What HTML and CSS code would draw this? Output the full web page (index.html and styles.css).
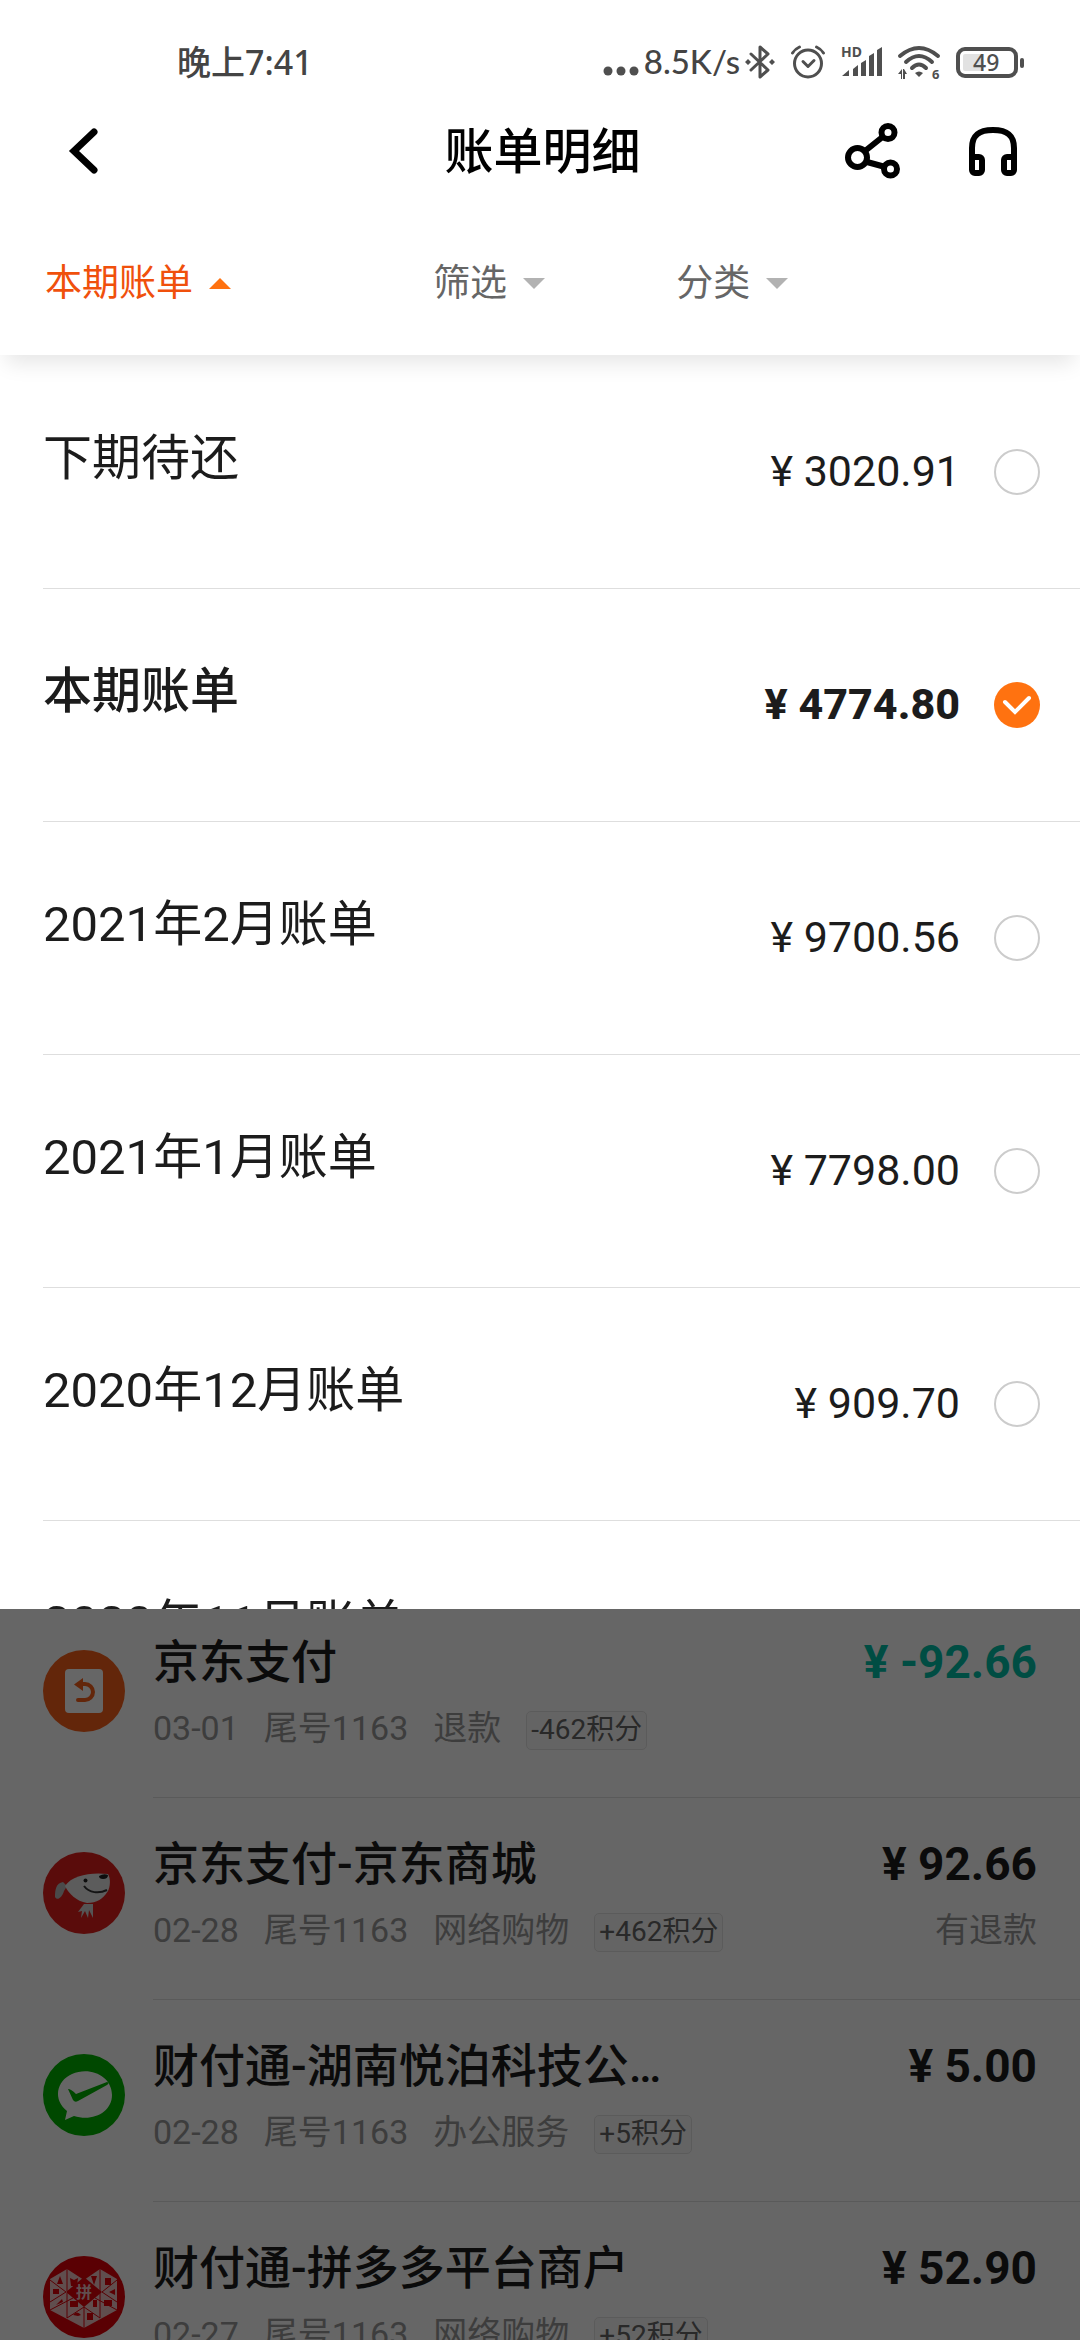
FILE: index.html
```html
<!DOCTYPE html>
<html lang="zh-CN">
  <head>
    <meta charset="UTF-8" />
    <meta name="viewport" content="width=device-width, initial-scale=1.0" />
    <title>账单明细</title>
    <link rel="stylesheet" href="styles.css">
  </head>
  <body>
    <header>
      <div class="status">
        <span class="time">晚上7:41</span>
        <div class="status-right">
          <div class="net">
            <svg class="dots" width="36" height="34" viewBox="0 0 36 34">
              <circle cx="5" cy="26" r="4.5" />
              <circle cx="18" cy="26" r="4.5" />
              <circle cx="31" cy="26" r="4.5" />
            </svg>
            <span>8.5K/s</span>
            <svg class="line" width="30" height="34" viewBox="0 0 30 34" stroke-width="3">
              <path d="M6 9L23 25L15 32V2L23 9L6 25" />
              <path d="M3 14L6 17L3 20L0 17zM27 14L30 17L27 20L24 17z" fill="#4f4f4f" stroke="none" />
            </svg>
          </div>
          <svg class="line" width="34" height="34" viewBox="0 0 34 34" stroke-width="3">
            <circle cx="17" cy="18.500" r="13.500" />
            <path d="M1.500 8Q4 4 8.500 2M32.500 8Q30 4 25.500 2M12 16.500l5 5 6-6" />
          </svg>
          <svg width="41" height="34" viewBox="0 0 41 34">
            <text x="0" y="12" font-size="14" class="svg-text">HD</text>
            <path d="M1 31L8 25V31zM12 24l5-4v11h-5zM20 18l5-3v16h-5zM28 11l5-3v23h-5zM36 5l5-3v29h-5z" />
          </svg>
          <svg width="42" height="34" viewBox="0 0 42 34">
            <g class="line" stroke-width="4">
              <path d="M2 11Q21-5 40 11M8 17Q21 5 34 17M14 23Q21 16 28 23" />
            </g>
            <path d="M17 28Q21 25 25 28L21 32z" />
            <path d="M0 29l4-5v10H3v-5zM5 34V24h1l3 5H7v5z" />
            <text x="34" y="34" font-size="13" class="svg-text">6</text>
          </svg>
          <svg width="68" height="34" viewBox="0 0 68 34">
            <rect x="2" y="4" width="58" height="27" rx="7" fill="none" stroke="#4f4f4f" stroke-width="4" />
            <rect x="7" y="9" width="20" height="17" rx="2" fill="#e2e2e2" />
            <rect x="64" y="13" width="4" height="10" rx="2" />
            <text x="17" y="26" font-size="23" class="svg-text thin">49</text>
          </svg>
        </div>
      </div>

      <div class="titlebar">
        <a href="#" class="back" aria-label="返回">
          <svg width="32" height="46" viewBox="0 0 32 46">
            <path d="M27 4L7 23L27 42" fill="none" stroke="#000" stroke-width="7" stroke-linecap="round" />
          </svg>
        </a>
        <h1>账单明细</h1>
        <div class="actions">
          <button type="button" aria-label="分享">
            <svg width="56" height="56" viewBox="0 0 56 56" fill="none" stroke="#000" stroke-width="6">
              <circle cx="12.500" cy="34.500" r="9.500" />
              <circle cx="43" cy="9.500" r="6.500" />
              <circle cx="45.500" cy="46" r="6.500" />
              <path d="M20 28L37.500 14M22 39L38.500 43.500" />
            </svg>
          </button>
          <button type="button" aria-label="客服">
            <svg width="50" height="50" viewBox="0 0 50 50" fill="none" stroke="#000" stroke-width="6" stroke-linejoin="round">
              <path d="M4 34V22C4 9 11 4 25 4S46 9 46 22V34" />
              <rect x="4" y="31" width="10" height="16" rx="3" />
              <rect x="36" y="31" width="10" height="16" rx="3" />
            </svg>
          </button>
        </div>
      </div>

      <nav class="tabs">
        <button type="button" class="tab active">本期账单<i class="arrow"></i></button>
        <button type="button" class="tab">筛选<i class="arrow"></i></button>
        <button type="button" class="tab">分类<i class="arrow"></i></button>
      </nav>
    </header>

    <ul class="sheet">
      <li>
        <label for="bill1">下期待还</label>
        <span class="sum">¥ 3020.91</span>
        <input type="radio" name="bill" id="bill1" />
      </li>
      <li class="selected">
        <label for="bill2">本期账单</label>
        <span class="sum">¥ 4774.80</span>
        <input type="radio" name="bill" id="bill2" checked />
      </li>
      <li>
        <label for="bill3">2021年2月账单</label>
        <span class="sum">¥ 9700.56</span>
        <input type="radio" name="bill" id="bill3" />
      </li>
      <li>
        <label for="bill4">2021年1月账单</label>
        <span class="sum">¥ 7798.00</span>
        <input type="radio" name="bill" id="bill4" />
      </li>
      <li>
        <label for="bill5">2020年12月账单</label>
        <span class="sum">¥ 909.70</span>
        <input type="radio" name="bill" id="bill5" />
      </li>
      <li>
        <label for="bill6">2020年11月账单</label>
        <input type="radio" name="bill" id="bill6" />
      </li>
    </ul>

    <main>
      <ul class="records">
        <li>
          <svg class="logo" viewBox="0 0 82 82">
            <circle cx="41" cy="41" r="41" fill="#f8601a" />
            <rect x="22" y="19" width="38" height="44" rx="4" fill="#fff" />
            <path d="M38 34H42a8 8 0 0 1 0 16H35" fill="none" stroke="#f8601a" stroke-width="4" stroke-linecap="round" />
            <path d="M31 34.500L40 28V41z" fill="#f8601a" />
          </svg>
          <div class="info">
            <div class="row">
              <h2>京东支付</h2>
              <span class="money refund">¥ -92.66</span>
            </div>
            <div class="row sub">
              <span>03-01</span>
              <span>尾号1163</span>
              <span>退款</span>
              <span class="tag">-462积分</span>
            </div>
          </div>
        </li>
        <li>
          <svg class="logo" viewBox="0 0 82 82">
            <circle cx="41" cy="41" r="41" fill="#e0201c" />
            <path d="M20 30C13 31 12 38 12 45C14 49 19 46 21 39L24 34z" fill="#b9b9b9" />
            <path d="M22 34C29 23 48 20 65 22C68 27 67 35 65 39C60 47 54 51 44 51C33 49 26 42 22 34z" fill="#e6e6e6" />
            <path d="M41 34C46 41 56 42 64 38" fill="none" stroke="#333" stroke-width="2" />
            <circle cx="42.500" cy="28.500" r="2" fill="#222" />
            <path d="M56 24Q61 21 65 23Q65 27 60 27Q56 27 56 24z" fill="#222" />
            <path d="M41 52H50V66L46 58L45 66L42 59L38 66L39 59L35 60z" fill="#d4d4d4" />
          </svg>
          <div class="info">
            <div class="row">
              <h2>京东支付-京东商城</h2>
              <span class="money">¥ 92.66</span>
            </div>
            <div class="row sub">
              <span>02-28</span>
              <span>尾号1163</span>
              <span>网络购物</span>
              <span class="tag">+462积分</span>
              <span class="note">有退款</span>
            </div>
          </div>
        </li>
        <li>
          <svg class="logo" viewBox="0 0 82 82">
            <circle cx="41" cy="41" r="41" fill="#02b300" />
            <path d="M22 66L24 57C10 46 13 27 29 20C47 12 69 22 69 41C69 58 50 68 31 62Z" fill="#fff" />
            <path d="M25 35Q28 35 33 40L64 28Q67 29 64 31L35 47Q32 49 30 46z" fill="#02b300" />
          </svg>
          <div class="info">
            <div class="row">
              <h2>财付通-湖南悦泊科技公…</h2>
              <span class="money">¥ 5.00</span>
            </div>
            <div class="row sub">
              <span>02-28</span>
              <span>尾号1163</span>
              <span>办公服务</span>
              <span class="tag">+5积分</span>
            </div>
          </div>
        </li>
        <li>
          <svg class="logo" viewBox="0 0 82 82">
            <circle cx="41" cy="41" r="41" fill="#e00008" />
            <path d="M24 13L41 24L57 13L74 23V54L41 72L7 54V23z" fill="#efc4c4" />
            <path d="M41 21L59 36L41 51L23 36z" fill="#e00008" />
            <path d="M24 13V35M57 13V35M24 37V62M57 37V62M41 51V72M7 24L23 36M74 24L59 36M7 46L23 36M74 46L59 36M7 54L30 42M74 54L52 42M24 62L41 51L57 62" fill="none" stroke="#e00008" stroke-width="1" />
            <g fill="#e00008">
              <path d="M17 20l3 8h-6zM27 22l4 2 4-2-1 8h-6zM48 20h6l-3 9zM62 22h6v7h-6zM10 33h6v5h-6zM66 36l6-3v6zM13 49l6-6 1 3zM27 45h8v6h-8zM50 44h4v7h-4zM61 44h8v6h-8zM30 59q4-5 8 0l-3 1zM44 57h6v7h-6z" />
            </g>
            <text x="41" y="42" font-size="16" text-anchor="middle" class="pin">拼</text>
          </svg>
          <div class="info">
            <div class="row">
              <h2>财付通-拼多多平台商户</h2>
              <span class="money">¥ 52.90</span>
            </div>
            <div class="row sub">
              <span>02-27</span>
              <span>尾号1163</span>
              <span>网络购物</span>
              <span class="tag">+52积分</span>
            </div>
          </div>
        </li>
      </ul>
      <div class="mask"></div>
    </main>
  </body>
</html>
```
FILE: styles.css
```css
* {
  margin: 0;
  padding: 0;
  box-sizing: border-box;
}

body {
  display: flex;
  flex-direction: column;
  height: 100vh;
  overflow: hidden;
  background-color: #fff;
  color: #1c1c1c;
  font-family: Roboto, "Noto Sans CJK SC", sans-serif;
  line-height: 1.2;
}

ul {
  list-style: none;
}

button {
  border: none;
  background: none;
  font-family: inherit;
  line-height: inherit;
  cursor: pointer;
}

svg {
  display: block;
  flex-shrink: 0;
  overflow: visible;
}

/* header */
header {
  position: relative;
  z-index: 2;
  flex-shrink: 0;
  background-color: #fff;
  box-shadow: 0 14px 20px -6px rgba(0, 0, 0, 0.1);
}

.status {
  display: flex;
  justify-content: space-between;
  align-items: center;
  height: 100px;
  padding: 24px 56px 0 177px;
  color: #444;
  fill: #4f4f4f;
  font-family: "Noto Sans", "Noto Sans CJK SC", sans-serif;
  font-weight: 500;
}

.time {
  font-size: 34px;
}

.status-right {
  display: flex;
  align-items: center;
  gap: 16px;
}

.net {
  display: flex;
  align-items: center;
  gap: 5px;
  font-family: Lato, sans-serif;
  font-size: 33px;
}

.line {
  fill: none;
  stroke: #4f4f4f;
  stroke-linejoin: round;
  stroke-linecap: round;
}

.svg-text {
  font-family: "Noto Sans", sans-serif;
  font-weight: 700;
}

.thin {
  font-weight: 500;
}

.titlebar {
  display: grid;
  grid-template-columns: 1fr auto 1fr;
  align-items: center;
  height: 104px;
  padding: 0 62px 2px 67px;
}

.titlebar h1 {
  padding-top: 5px;
  color: #000;
  font-size: 49px;
  font-weight: 500;
}

.actions {
  display: flex;
  align-items: center;
  justify-content: flex-end;
  gap: 67px;
}

.tabs {
  display: grid;
  grid-template-columns: 37.5% 23.5% 1fr;
  align-items: center;
  height: 151px;
  padding: 9px 0 0 45px;
}

.tab {
  display: flex;
  align-items: center;
  gap: 16px;
  color: #666;
  font-size: 37px;
}

.arrow {
  border: 11px solid transparent;
  border-top-color: #b2b2b2;
  border-bottom: none;
}

.tab.active {
  color: #f0500c;
}

.active .arrow {
  border-top: none;
  border-bottom: 11px solid #ff7210;
}

/* bill picker */
.sheet {
  position: relative;
  z-index: 1;
  flex-shrink: 0;
  height: 1254px;
  padding-top: 1px;
  overflow: hidden;
  background-color: #fff;
}

.sheet li {
  display: flex;
  align-items: center;
  height: 233px;
  margin-left: 43px;
  padding-right: 40px;
  border-bottom: 1px solid #dedede;
}

.sheet label {
  flex: 1;
  padding-bottom: 26px;
  font-size: 49px;
}

.sum {
  margin-right: 34px;
  font-size: 43px;
}

.selected label {
  font-weight: 500;
}

.selected .sum {
  font-weight: 800;
}

.sheet input {
  appearance: none;
  width: 46px;
  height: 46px;
  border: 2px solid #ccc;
  border-radius: 50%;
}

.sheet input:checked {
  border: none;
  background: #ff7210 url("data:image/svg+xml,%3Csvg xmlns='http://www.w3.org/2000/svg' viewBox='0 0 46 46'%3E%3Cpath d='M11 20L21 30L35 16' fill='none' stroke='white' stroke-width='4' stroke-linecap='round'/%3E%3C/svg%3E");
}

/* records under the mask */
main {
  position: relative;
  flex: 1;
  min-height: 0;
}

.records {
  margin-top: -13px;
  height: 100%;
}

.records li {
  display: flex;
  height: 202px;
  padding-left: 43px;
}

.logo {
  width: 82px;
  height: 82px;
  margin: 54px 28px 0 0;
}

.info {
  flex: 1;
  padding: 40px 43px 0 0;
  border-bottom: 1px solid #e0e0e0;
}

.row {
  display: flex;
  align-items: center;
  height: 54px;
}

.row h2 {
  flex: 1;
  font-size: 46px;
  font-weight: 500;
}

.money {
  font-size: 46px;
  font-weight: 700;
}

.refund {
  color: #00c0a8;
}

.sub {
  gap: 25px;
  margin-top: 11px;
  color: #999;
  font-size: 34px;
}

.tag {
  height: 39px;
  margin-top: 5px;
  padding: 0 4px;
  border: 1px solid #e4e4e4;
  border-radius: 5px;
  background-color: #fafafa;
  color: #666;
  font-size: 28px;
  line-height: 36px;
}

.note {
  margin-left: auto;
}

.pin {
  fill: #efc4c4;
  font-weight: 700;
}

.mask {
  position: absolute;
  top: 0;
  right: 0;
  bottom: 0;
  left: 0;
  background-color: rgba(0, 0, 0, 0.6);
}
```
